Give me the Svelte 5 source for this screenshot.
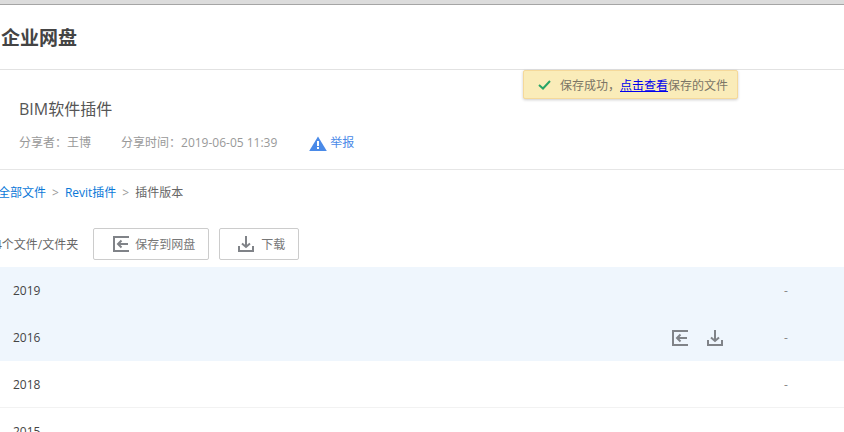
<script>
  const rows = [
    { name: '2019', active: true },
    { name: '2016', active: true, actions: true },
    { name: '2018' },
    { name: '2015' }
  ];
</script>

<div class="page">
  <div class="topbar"></div>
  <header class="head"><h1>企业网盘</h1></header>

  <section class="info">
    <h2>BIM软件插件</h2>
    <div class="meta">
      <span>分享者：王博</span>
      <span class="time">分享时间：2019-06-05 11:39</span>
      <a class="report" href="#report">
        <svg width="18" height="15" viewBox="0 0 18 15">
          <path d="M9 0.5 L17.8 15 H0.2 Z" fill="#4a8ae8" />
          <rect x="8" y="5" width="2" height="5" fill="#fff" />
          <rect x="8" y="11" width="2" height="2" fill="#fff" />
        </svg>
        举报
      </a>
    </div>
  </section>

  <nav class="crumbs">
    <a href="#all">全部文件</a><i>&gt;</i><a href="#revit">Revit插件</a><i>&gt;</i><span>插件版本</span>
  </nav>

  <div class="toolbar">
    <span class="count">共4个文件/文件夹</span>
    <button class="save">
      <svg width="16" height="16" viewBox="0 0 16 16" fill="none" stroke="#808388" stroke-width="2">
        <path d="M16 1 H1 V15 H16" />
        <path d="M15 8 H5 M8.5 4.5 L5 8 L8.5 11.500" />
      </svg>
      保存到网盘
    </button>
    <button class="down">
      <svg width="16" height="16" viewBox="0 0 16 16" fill="none" stroke="#808388" stroke-width="2">
        <path d="M1 10 V15 H15 V10" />
        <path d="M8 0 V11 M4 7.500 L8 11 L12 7.500" />
      </svg>
      下载
    </button>
  </div>

  <div class="list">
    {#each rows as row}
      <div class="row" class:active={row.active}>
        <span class="name">{row.name}</span>
        {#if row.actions}
          <div class="actions">
            <svg width="16" height="16" viewBox="0 0 16 16" fill="none" stroke="#808388" stroke-width="2">
              <path d="M16 1 H1 V15 H16" />
              <path d="M15 8 H5 M8.500 4.500 L5 8 L8.500 11.500" />
            </svg>
            <svg width="16" height="16" viewBox="0 0 16 16" fill="none" stroke="#808388" stroke-width="2">
              <path d="M1 10 V15 H15 V10" />
              <path d="M8 0 V11 M4 7.500 L8 11 L12 7.500" />
            </svg>
          </div>
        {/if}
        <span class="size">-</span>
      </div>
    {/each}
  </div>

  <div class="toast">
    <svg width="13" height="10" viewBox="0 0 13 10" fill="none" stroke="#27a566" stroke-width="2">
      <path d="M1 5 L5 8.500 L12 1" />
    </svg>
    <span>保存成功，<a href="#view">点击查看</a>保存的文件</span>
  </div>
</div>

<style>
  :global(body) {
    margin: 0;
    background: #fff;
  }

  .page {
    position: relative;
    height: 432px;
    overflow: hidden;
    font-family: "Open Sans", "Noto Sans CJK SC", sans-serif;
    font-size: 12px;
    color: #666;
  }

  .topbar {
    height: 4px;
    background: #dcdcdc;
    border-bottom: 1px solid #a5a5a5;
  }

  .head {
    height: 64px;
    display: flex;
    align-items: center;
    padding-left: 1px;
    border-bottom: 1px solid #e2e2e2;
  }

  h1 {
    margin: 0;
    font-size: 19px;
    font-weight: 700;
    color: #444;
  }

  .info {
    height: 100px;
    box-sizing: border-box;
    padding: 28px 0 0 19px;
    border-bottom: 1px solid #e6e6e6;
  }

  h2 {
    margin: 0;
    font-size: 16px;
    line-height: 22px;
    font-weight: 400;
    color: #555;
  }

  .meta {
    display: flex;
    align-items: center;
    margin-top: 13px;
    line-height: 20px;
    color: #999;
  }

  .time {
    margin-left: 30px;
  }

  .report {
    display: flex;
    align-items: center;
    gap: 3px;
    margin-left: 32px;
    color: #4a8ae8;
    text-decoration: none;
  }

  .crumbs {
    display: flex;
    align-items: center;
    height: 44px;
    margin-left: -2px;
    color: #666;
  }

  .crumbs a {
    color: #0a78d8;
    text-decoration: none;
  }

  .crumbs i {
    font-style: normal;
    color: #999;
    margin: 0 6px;
  }

  .toolbar {
    display: flex;
    align-items: center;
    gap: 10px;
    height: 32px;
    margin: 14px 0 7px -17px;
  }

  .count {
    margin-right: 5px;
    white-space: nowrap;
    color: #666;
  }

  button {
    display: flex;
    align-items: center;
    height: 32px;
    box-sizing: border-box;
    background: #fff;
    border: 1px solid #ccc;
    border-radius: 2px;
    font: inherit;
    color: #777;
    padding: 0;
  }

  .save {
    width: 116px;
    padding-left: 19px;
    gap: 6px;
  }

  .down {
    width: 80px;
    padding-left: 18px;
    gap: 7px;
  }

  .row {
    display: flex;
    align-items: center;
    height: 47px;
    box-sizing: border-box;
    padding-left: 13px;
    color: #444;
    border-bottom: 1px solid #f2f2f2;
  }

  .row.active {
    background: #eff6fd;
    border-bottom: none;
  }

  .name {
    flex: 1;
  }

  .actions {
    display: flex;
    gap: 19px;
    margin-right: 61px;
  }

  .size {
    width: 60px;
    color: #888;
  }

  .toast {
    position: absolute;
    left: 523px;
    top: 70px;
    width: 215px;
    height: 29px;
    box-sizing: border-box;
    display: flex;
    align-items: center;
    gap: 9px;
    padding-left: 14px;
    background: #faecb9;
    border: 1px solid #f5d99a;
    border-radius: 2px;
    box-shadow: 0 1px 3px rgba(0, 0, 0, 0.2);
    color: #7b7566;
  }

  .toast a {
    color: #0000ee;
  }
</style>
